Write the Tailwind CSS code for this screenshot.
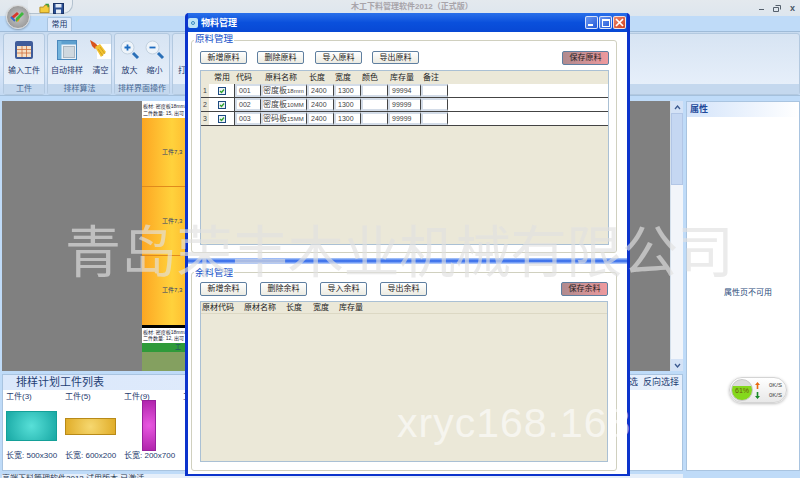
<!DOCTYPE html>
<html><head><meta charset="utf-8">
<script src="https://cdn.jsdelivr.net/npm/@tailwindcss/browser@4"></script>
</head>
<body class="m-0">
<div class="relative w-[800px] h-[478px] overflow-hidden flex flex-col bg-[#bfdbf8] text-[8px] text-[#1e3a6e] font-['Liberation_Sans','Noto_Sans_CJK_SC',sans-serif]">

  <!-- Title bar -->
  <div class="h-[16px] shrink-0 flex items-center bg-gradient-to-b from-[#e4e9ee] to-[#dde6ee] relative">
    <div class="absolute left-[28px] top-0 w-[45px] h-[14px] rounded-br-[10px] bg-[#e9eef3] border-r border-b border-[#b4c2cf]"></div>
    <svg class="absolute left-[39px] top-[3px]" width="11" height="11" viewBox="0 0 12 11"><path d="M1 4h4l1-2h5v8H1z" fill="#f4cc3c" stroke="#b48a1c"/><path d="M7 1l3 0 0 3" fill="none" stroke="#3a9a3a" stroke-width="1.5"/></svg>
    <svg class="absolute left-[53px] top-[3px]" width="11" height="11" viewBox="0 0 11 11"><rect x="0.5" y="0.5" width="10" height="10" fill="#2b4f94" stroke="#1b3468"/><rect x="2.5" y="1" width="6" height="3.5" fill="#dfe8f5"/><rect x="3" y="6.5" width="5" height="4" fill="#e8edf4"/></svg>
    <span class="absolute left-[351px] top-[2px] text-[8px] leading-[10px] font-bold text-[#a8a4aa] whitespace-nowrap">木工下料管理软件2012（正式版）</span>
    <div class="ml-auto mr-[2px] flex items-center gap-[9px] text-[#4a5766]">
      <span class="w-[5px] h-[1.5px] bg-[#55606c] mt-[3px]"></span>
      <svg width="8" height="7" viewBox="0 0 8 7"><path d="M2.5.5h5v4M.5 2.5h5v4h-5z" fill="none" stroke="#55606c"/></svg>
      <span class="w-[8px] text-[9px] leading-[9px] font-bold">x</span>
    </div>
  </div>

  <!-- Tabs -->
  <div class="h-[16px] shrink-0 flex items-end pl-[47px] border-b border-[#9fbbd8] bg-[#bfdbf8]">
    <div class="h-[14px] w-[25px] flex items-center justify-center bg-[#dfeafa] border border-b-0 border-[#a9c4e0] rounded-t-[2px] text-[8px] text-[#20386a]">常用</div>
  </div>

  <!-- Ribbon -->
  <div class="h-[64px] shrink-0 flex gap-[2px] pl-[3px] pt-[1px] bg-gradient-to-b from-[#c8dbf0] via-[#dfeafa] to-[#c3d9f2] border-b border-[#a4c0dc]">
    <div class="w-[42px] h-[62px] flex flex-col rounded-[3px] border border-[#b3c9e0] bg-gradient-to-b from-[#d7e4f3] to-[#e9f1fb]">
      <div class="flex-1 flex flex-col items-center pt-[6px]">
        <svg width="20" height="20" viewBox="0 0 20 20"><rect x="1" y="1" width="18" height="18" rx="2" fill="#3f5c9a"/><rect x="3" y="6" width="14" height="11" fill="#f6e0c4"/><path d="M3 9.5h14M3 13h14M8 6v11M12.5 6v11" stroke="#d0703c" stroke-width=".8"/></svg>
        <span class="mt-[6px] leading-[10px]">输入工件</span>
      </div>
      <div class="h-[10px] bg-[#c4d8ee] text-center leading-[10px] text-[#4a6a94]">工件</div>
    </div>
    <div class="w-[65px] h-[62px] flex flex-col rounded-[3px] border border-[#b3c9e0] bg-gradient-to-b from-[#d7e4f3] to-[#e9f1fb]">
      <div class="flex-1 flex justify-center gap-[7px] pt-[6px] pl-[3px]">
        <div class="flex flex-col items-center">
          <svg width="20" height="20" viewBox="0 0 20 20"><rect x=".5" y=".5" width="19" height="19" fill="#eaf1f8" stroke="#4a88bc"/><rect x="1" y="1" width="18" height="3.5" fill="#5da0cf"/><rect x="1" y="1" width="3.5" height="18" fill="#74b4dc"/><rect x="6.5" y="6.5" width="11" height="11" fill="#cfd8df" stroke="#aab6c0"/></svg>
          <span class="mt-[6px] leading-[10px] whitespace-nowrap">自动排样</span>
        </div>
        <div class="flex flex-col items-center">
          <svg width="21" height="20" viewBox="0 0 21 20"><rect x="7" y="4" width="14" height="15" fill="#fff"/><path d="M0 0l5 3 3 3-3 3-3-3z" fill="#d9541c"/><path d="M5 7l5-3 6 8-5 5z" fill="#f2c230"/><path d="M8 9l5 7M10 7l5 7" stroke="#c0901c" stroke-width=".7"/></svg>
          <span class="mt-[6px] leading-[10px]">清空</span>
        </div>
      </div>
      <div class="h-[10px] bg-[#c4d8ee] text-center leading-[10px] text-[#4a6a94]">排样算法</div>
    </div>
    <div class="w-[56px] h-[62px] flex flex-col rounded-[3px] border border-[#b3c9e0] bg-gradient-to-b from-[#d7e4f3] to-[#e9f1fb]">
      <div class="flex-1 flex justify-center gap-[5px] pt-[6px]">
        <div class="flex flex-col items-center">
          <svg width="20" height="20" viewBox="0 0 20 20"><circle cx="7.5" cy="7.5" r="6.5" fill="#eef4fa" stroke="#c3d2e0"/><path d="M4.5 7.5h6M7.5 4.5v6" stroke="#1d6cc0" stroke-width="1.8"/><path d="M13 13l5 5" stroke="#2a70b8" stroke-width="3"/></svg>
          <span class="mt-[6px] leading-[10px]">放大</span>
        </div>
        <div class="flex flex-col items-center">
          <svg width="20" height="20" viewBox="0 0 20 20"><circle cx="7.5" cy="7.5" r="6.5" fill="#eef4fa" stroke="#c3d2e0"/><path d="M4.5 7.5h6" stroke="#1d6cc0" stroke-width="1.8"/><path d="M13 13l5 5" stroke="#2a70b8" stroke-width="3"/></svg>
          <span class="mt-[6px] leading-[10px]">缩小</span>
        </div>
      </div>
      <div class="h-[10px] bg-[#c4d8ee] text-center leading-[10px] text-[#4a6a94] whitespace-nowrap">排样界面操作</div>
    </div>
    <div class="flex-1 h-[62px] flex flex-col rounded-[3px] border border-[#b3c9e0] bg-gradient-to-b from-[#d7e4f3] to-[#e9f1fb]">
      <div class="flex-1 pl-[5px] pt-[32px] leading-[10px]">打</div>
      <div class="h-[10px] bg-[#c4d8ee]"></div>
    </div>
  </div>

  <!-- Work area -->
  <div class="flex-1 min-h-0 flex pt-[5px] gap-[3px] bg-[#bfdbf8]">
    <div class="w-[683px] shrink-0 flex flex-col pl-[2px] gap-[3px]">
      <div class="h-[270px] flex shrink-0">
        <div class="flex-1 bg-[#808080] flex pl-[140px]">
          <div class="w-[60px] flex flex-col overflow-hidden">
            <div class="h-[17px] bg-white text-[5px] leading-[7px] pl-[1px] pt-[2px] whitespace-nowrap text-[#223]">
              <div>板材: 密度板18mm2</div><div>二件数量: 15, 出可</div>
            </div>
            <div class="h-[69px] border-b border-[#e08a1c] bg-gradient-to-r from-[#fca622] via-[#ffd23c] to-[#fca622] flex items-center pl-[20px] text-[6px]">工件7,3</div>
            <div class="h-[69px] border-b border-[#e08a1c] bg-gradient-to-r from-[#fca622] via-[#ffd23c] to-[#fca622] flex items-center pl-[20px] text-[6px]">工件7,3</div>
            <div class="h-[69px] bg-gradient-to-r from-[#fca622] via-[#ffd23c] to-[#fca622] flex items-center pl-[20px] text-[6px]">工件7,3</div>
            <div class="h-[3px] bg-black"></div>
            <div class="h-[15px] bg-white text-[5px] leading-[6px] pl-[1px] pt-[1px] whitespace-nowrap text-[#223]">
              <div>板材: 密度板18mm2</div><div>二件数量: 12, 出可</div>
            </div>
            <div class="h-[9px] bg-[#2f9a3a] text-[6px] leading-[9px] pl-[33px]">工</div>
            <div class="flex-1 bg-[#84a060]"></div>
          </div>
        </div>
        <div class="w-[13px] flex flex-col bg-[#f2f5fa] border-l border-[#d4e0ec]">
          <div class="h-[12px] bg-[#d4e2f6] flex items-center justify-center"><svg width="7" height="5" viewBox="0 0 7 5"><path d="M1 4l2.5-3 2.5 3" fill="none" stroke="#3c5a90" stroke-width="1.3"/></svg></div>
          <div class="h-[72px] bg-[#c5d7f2] border border-[#b2c6e6]"></div>
          <div class="flex-1"></div>
          <div class="h-[12px] bg-[#d4e2f6] flex items-center justify-center"><svg width="7" height="5" viewBox="0 0 7 5"><path d="M1 1l2.5 3 2.5-3" fill="none" stroke="#3c5a90" stroke-width="1.3"/></svg></div>
        </div>
      </div>
      <div class="h-[97px] shrink-0 bg-white border border-[#a9c4e0] flex flex-col">
        <div class="h-[15px] flex bg-gradient-to-r from-[#dbe8fb] to-[#e6effc] items-center pl-[13px] text-[11px] leading-[15px] text-[#1f3f74]">排样计划工件列表<span class="ml-auto mr-[3px] text-[9px]">选&nbsp;&nbsp;反向选择</span></div>
        <div class="flex pl-[3px] gap-[7px]">
          <div class="w-[52px] flex flex-col">
            <div class="mt-[2px] leading-[10px]">工件(3)</div>
            <div class="h-[41px] flex items-start"><div class="w-[51px] h-[30px] mt-[9px] border border-[#14a098] bg-[radial-gradient(circle,#58e0d8,#18a8a4)]"></div></div>
            <div class="mt-[8px] leading-[10px] whitespace-nowrap">长宽: 500x300</div>
          </div>
          <div class="w-[52px] flex flex-col">
            <div class="mt-[2px] leading-[10px]">工件(5)</div>
            <div class="h-[41px] flex items-start"><div class="w-[51px] h-[17px] mt-[16px] border border-[#b88a18] bg-[radial-gradient(circle,#f6d870,#e0ac28)]"></div></div>
            <div class="mt-[8px] leading-[10px] whitespace-nowrap">长宽: 600x200</div>
          </div>
          <div class="w-[52px] relative flex flex-col">
            <div class="mt-[2px] leading-[10px]">工件(9)</div>
            <div class="h-[41px]"></div>
            <div class="absolute left-[18px] top-[10px] w-[14px] h-[51px] border border-[#98209c] bg-[radial-gradient(circle,#e858e0,#b024ac)]"></div>
            <div class="mt-[8px] leading-[10px] whitespace-nowrap">长宽: 200x700</div>
          </div>
          <div class="mt-[2px] leading-[10px]">工件</div>
        </div>
      </div>
      <div class="h-[8px] leading-[10px] text-[#2a3a54] whitespace-nowrap overflow-hidden bg-[#e6effa]">高端下料管理软件2012 试用版本 已激活</div>
    </div>
    <div class="flex-1 flex flex-col h-[370px] bg-white border border-[#a9c4e0]">
      <div class="h-[15px] bg-gradient-to-r from-[#d4e4fa] to-white pl-[3px] text-[9px] leading-[15px] font-bold text-[#1f4a9a]">属性</div>
      <div class="flex-1 flex items-center justify-center pb-[2px] pl-[10px] text-[#2a4a7a]">属性页不可用</div>
    </div>
  </div>

  <!-- Network widget -->
  <div class="absolute left-[729px] top-[377px] w-[58px] h-[26px] rounded-full bg-gradient-to-b from-white to-[#e8e8e8] border border-[#d4d4d4] shadow-[0_1px_3px_rgba(0,0,0,.25)] flex items-center">
    <div class="w-[22px] h-[22px] ml-[1px] rounded-full border border-[#c8c8c8] bg-gradient-to-b from-[#dcdcdc] from-30% to-[#84d81c] to-30% text-[7px] leading-[22px] text-center text-[#6a5a10]">61%</div>
    <div class="ml-[2px] flex flex-col text-[6px] leading-[10px] text-[#444] w-[27px]">
      <div class="flex justify-between items-center"><svg width="5" height="7" viewBox="0 0 5 7"><path d="M2.5 0L5 3H3.3v4H1.7V3H0z" fill="#e86a10"/></svg><span>0K/S</span></div>
      <div class="flex justify-between items-center"><svg width="5" height="7" viewBox="0 0 5 7"><path d="M2.5 7L5 4H3.3V0H1.7v4H0z" fill="#1a8a2a"/></svg><span>0K/S</span></div>
    </div>
  </div>

  <!-- Dialog -->
  <div class="absolute left-[185px] top-[13px] w-[445px] h-[463px] bg-[#0a3ad0] rounded-t-[4px] border-[3px] border-t-0 border-b-[2px] border-[#0c34cc] flex flex-col text-[#222]">
    <div class="h-[19px] shrink-0 bg-gradient-to-b from-[#2a70ea] via-[#0a50dc] to-[#0848d4] flex items-center">
      <div class="w-[10px] h-[10px] rounded-[2px] bg-[#bfe4f6] flex items-center justify-center"><div class="w-[4px] h-[4px] rounded-full border border-[#3a8ac0]"></div></div>
      <span class="ml-[3px] text-[9px] font-bold text-white leading-[12px]">物料管理</span>
      <div class="ml-auto mr-[1px] flex gap-[1px]">
        <div class="w-[13px] h-[13px] rounded-[2px] border border-white/80 bg-gradient-to-br from-[#6a96f0] to-[#2458d8] relative"><span class="absolute left-[2px] bottom-[2px] w-[5px] h-[2px] bg-white"></span></div>
        <div class="w-[13px] h-[13px] rounded-[2px] border border-white/80 bg-gradient-to-br from-[#6a96f0] to-[#2458d8] flex items-center justify-center"><span class="w-[8px] h-[8px] border border-white border-t-2"></span></div>
        <div class="w-[13px] h-[13px] rounded-[2px] border border-white/80 bg-gradient-to-br from-[#ec8468] to-[#d0401c] flex items-center justify-center"><svg width="9" height="9" viewBox="0 0 9 9"><path d="M1 1l7 7M8 1l-7 7" stroke="#fff" stroke-width="1.7"/></svg></div>
      </div>
    </div>
    <div class="flex-1 min-h-0 bg-white flex flex-col">
      <!-- upper -->
      <div class="h-[226px] shrink-0 relative pt-[8px] pl-[3px] pr-[10px]">
        <div class="h-[213px] border border-[#d0d0bf] rounded-[3px] pt-[10px] pl-[8px] pr-[7px] flex flex-col">
          <div class="flex h-[14px] text-[8px]">
            <div class="w-[47px] h-[13px] mr-[10px] flex items-center justify-center border border-[#5f7fa0] rounded-[2px] bg-gradient-to-b from-white to-[#ecebe2]">新增原料</div>
            <div class="w-[47px] h-[13px] mr-[11px] flex items-center justify-center border border-[#5f7fa0] rounded-[2px] bg-gradient-to-b from-white to-[#ecebe2]">删除原料</div>
            <div class="w-[47px] h-[13px] mr-[10px] flex items-center justify-center border border-[#5f7fa0] rounded-[2px] bg-gradient-to-b from-white to-[#ecebe2]">导入原料</div>
            <div class="w-[47px] h-[13px] flex items-center justify-center border border-[#5f7fa0] rounded-[2px] bg-gradient-to-b from-white to-[#ecebe2]">导出原料</div>
            <div class="ml-auto w-[47px] h-[14px] flex items-center justify-center border border-[#5f7fa0] rounded-[2px] bg-gradient-to-r from-[#b08a8e] to-[#ee9a9e]">保存原料</div>
          </div>
          <div class="mt-[5px] h-[175px] flex flex-col border border-[#aac0d4] bg-[#ebe8d8] text-[8px]">
            <div class="h-[13px] flex items-center leading-[13px]">
              <span class="w-[8px]"></span>
              <span class="w-[26px] text-center">常用</span><span class="w-[26px] pl-[1px]">代码</span><span class="w-[46px] pl-[4px]">原料名称</span><span class="w-[27px] pl-[2px]">长度</span><span class="w-[27px] pl-[1px]">宽度</span><span class="w-[27px] pl-[1px]">颜色</span><span class="w-[33px] pl-[2px]">库存量</span><span class="pl-[2px]">备注</span>
            </div>
            <div class="bg-white text-[7px] flex flex-col text-[#444]">
              <div class="h-[14px] flex items-center border-b border-[#444]">
                <span class="w-[8px] text-center bg-[#ebe8d8] self-stretch leading-[14px]">1</span>
                <span class="w-[26px] self-stretch flex items-center justify-center border-r border-[#444]"><svg width="8" height="8" viewBox="0 0 8 8"><rect x=".5" y=".5" width="7" height="7" fill="#eef2f6" stroke="#1c4a80"/><path d="M2 4l1.5 1.5L6 2.5" fill="none" stroke="#2ca02c" stroke-width="1.3"/></svg></span>
                <span class="w-[26px] self-stretch border-2 border-[#d3dce8] border-r-[#444] border-r pl-[2px] leading-[10px]">001</span>
                <span class="w-[46px] self-stretch border-2 border-[#d3dce8] border-r-[#444] border-r leading-[10px] whitespace-nowrap overflow-hidden"><span class="text-[8px]">密度板</span><span class="text-[6px]">18mm</span></span>
                <span class="w-[27px] self-stretch border-2 border-[#d3dce8] border-r-[#444] border-r pl-[2px] leading-[10px]">2400</span>
                <span class="w-[27px] self-stretch border-2 border-[#d3dce8] border-r-[#444] border-r pl-[2px] leading-[10px]">1300</span>
                <span class="w-[27px] self-stretch border-2 border-[#d3dce8] border-r-[#444] border-r"></span>
                <span class="w-[33px] self-stretch border-2 border-[#d3dce8] border-r-[#444] border-r pl-[2px] leading-[10px]">99994</span>
                <span class="w-[27px] self-stretch border-2 border-[#d3dce8] border-r-[#444] border-r"></span>
              </div>
              <div class="h-[14px] flex items-center border-b border-[#444]">
                <span class="w-[8px] text-center bg-[#ebe8d8] self-stretch leading-[14px]">2</span>
                <span class="w-[26px] self-stretch flex items-center justify-center border-r border-[#444]"><svg width="8" height="8" viewBox="0 0 8 8"><rect x=".5" y=".5" width="7" height="7" fill="#eef2f6" stroke="#1c4a80"/><path d="M2 4l1.5 1.5L6 2.5" fill="none" stroke="#2ca02c" stroke-width="1.3"/></svg></span>
                <span class="w-[26px] self-stretch border-2 border-[#d3dce8] border-r-[#444] border-r pl-[2px] leading-[10px]">002</span>
                <span class="w-[46px] self-stretch border-2 border-[#d3dce8] border-r-[#444] border-r leading-[10px] whitespace-nowrap overflow-hidden"><span class="text-[8px]">密度板</span><span class="text-[6px]">10MM</span></span>
                <span class="w-[27px] self-stretch border-2 border-[#d3dce8] border-r-[#444] border-r pl-[2px] leading-[10px]">2400</span>
                <span class="w-[27px] self-stretch border-2 border-[#d3dce8] border-r-[#444] border-r pl-[2px] leading-[10px]">1300</span>
                <span class="w-[27px] self-stretch border-2 border-[#d3dce8] border-r-[#444] border-r"></span>
                <span class="w-[33px] self-stretch border-2 border-[#d3dce8] border-r-[#444] border-r pl-[2px] leading-[10px]">99999</span>
                <span class="w-[27px] self-stretch border-2 border-[#d3dce8] border-r-[#444] border-r"></span>
              </div>
              <div class="h-[14px] flex items-center border-b border-[#444]">
                <span class="w-[8px] text-center bg-[#ebe8d8] self-stretch leading-[14px]">3</span>
                <span class="w-[26px] self-stretch flex items-center justify-center border-r border-[#444]"><svg width="8" height="8" viewBox="0 0 8 8"><rect x=".5" y=".5" width="7" height="7" fill="#eef2f6" stroke="#1c4a80"/><path d="M2 4l1.5 1.5L6 2.5" fill="none" stroke="#2ca02c" stroke-width="1.3"/></svg></span>
                <span class="w-[26px] self-stretch border-2 border-[#d3dce8] border-r-[#444] border-r pl-[2px] leading-[10px]">003</span>
                <span class="w-[46px] self-stretch border-2 border-[#d3dce8] border-r-[#444] border-r leading-[10px] whitespace-nowrap overflow-hidden"><span class="text-[8px]">密码板</span><span class="text-[6px]">15MM</span></span>
                <span class="w-[27px] self-stretch border-2 border-[#d3dce8] border-r-[#444] border-r pl-[2px] leading-[10px]">2400</span>
                <span class="w-[27px] self-stretch border-2 border-[#d3dce8] border-r-[#444] border-r pl-[2px] leading-[10px]">1300</span>
                <span class="w-[27px] self-stretch border-2 border-[#d3dce8] border-r-[#444] border-r"></span>
                <span class="w-[33px] self-stretch border-2 border-[#d3dce8] border-r-[#444] border-r pl-[2px] leading-[10px]">99999</span>
                <span class="w-[27px] self-stretch border-2 border-[#d3dce8] border-r-[#444] border-r"></span>
              </div>
            </div>
          </div>
        </div>
        <span class="absolute left-[6px] top-0 bg-white px-[1px] text-[9.5px] leading-[13px] text-[#1450c8]">原料管理</span>
      </div>
      <!-- splitter -->
      <div class="h-[6px] shrink-0 bg-gradient-to-b from-[#b4ccf8] via-[#2a60e8] to-[#c4d6fa]"></div>
      <!-- lower -->
      <div class="flex-1 min-h-0 relative pt-[8px] pl-[3px] pr-[10px] pb-[3px]">
        <div class="h-full border border-[#d0d0bf] rounded-[3px] pt-[9px] pl-[8px] pr-[8px] pb-[8px] flex flex-col">
          <div class="flex h-[14px] text-[8px]">
            <div class="w-[47px] h-[14px] mr-[13px] flex items-center justify-center border border-[#5f7fa0] rounded-[2px] bg-gradient-to-b from-white to-[#ecebe2]">新增余料</div>
            <div class="w-[47px] h-[14px] mr-[13px] flex items-center justify-center border border-[#5f7fa0] rounded-[2px] bg-gradient-to-b from-white to-[#ecebe2]">删除余料</div>
            <div class="w-[47px] h-[14px] mr-[13px] flex items-center justify-center border border-[#5f7fa0] rounded-[2px] bg-gradient-to-b from-white to-[#ecebe2]">导入余料</div>
            <div class="w-[47px] h-[14px] flex items-center justify-center border border-[#5f7fa0] rounded-[2px] bg-gradient-to-b from-white to-[#ecebe2]">导出余料</div>
            <div class="ml-auto w-[47px] h-[14px] flex items-center justify-center border border-[#5f7fa0] rounded-[2px] bg-gradient-to-r from-[#b08a8e] to-[#ee9a9e]">保存余料</div>
          </div>
          <div class="mt-[5px] flex-1 flex flex-col border border-[#aac0d4] bg-[#ebe8d8] text-[8px]">
            <div class="h-[12px] flex items-center leading-[12px] border-b border-[#dcd8c4] pl-[1px]">
              <span class="w-[42px]">原材代码</span><span class="w-[42px]">原材名称</span><span class="w-[27px]">长度</span><span class="w-[26px]">宽度</span><span>库存量</span>
            </div>
          </div>
        </div>
        <span class="absolute left-[6px] top-[2px] bg-white px-[1px] text-[9.5px] leading-[13px] text-[#1450c8]">余料管理</span>
      </div>
    </div>
  </div>

  <!-- Logo orb -->
  <div class="absolute left-[6px] top-[5px] w-[24px] h-[24px] rounded-full bg-[radial-gradient(circle,#c8c8c8,#8a8a8a)] border border-[#dcdcdc] flex items-center justify-center shadow-[0_1px_2px_rgba(0,0,0,.3)]">
    <svg width="16" height="15" viewBox="0 0 16 15"><path d="M1 7l6-5 2 2-6 5z" fill="#d8382c"/><path d="M5 10l3-3 2 2-2 3z" fill="#f0a020"/><path d="M6 12l8-8-2-2-6 6z" fill="#3fb83f"/><path d="M1 7l4 4" stroke="#3a6ac8" stroke-width="2"/></svg>
  </div>

  <!-- Watermark -->
  <div class="absolute left-[65px] top-[216px] text-[56px] leading-[64px] tracking-[-0.3px] text-[#e0e0e0]/65 whitespace-nowrap font-['Noto_Sans_CJK_SC',sans-serif] pointer-events-none">青岛荣丰木业机械有限公司</div>
  <div class="absolute left-[397px] top-[400px] text-[41px] leading-[46px] tracking-[1px] text-white/60 whitespace-nowrap pointer-events-none">xryc168.168</div>
</div>
</body></html>
